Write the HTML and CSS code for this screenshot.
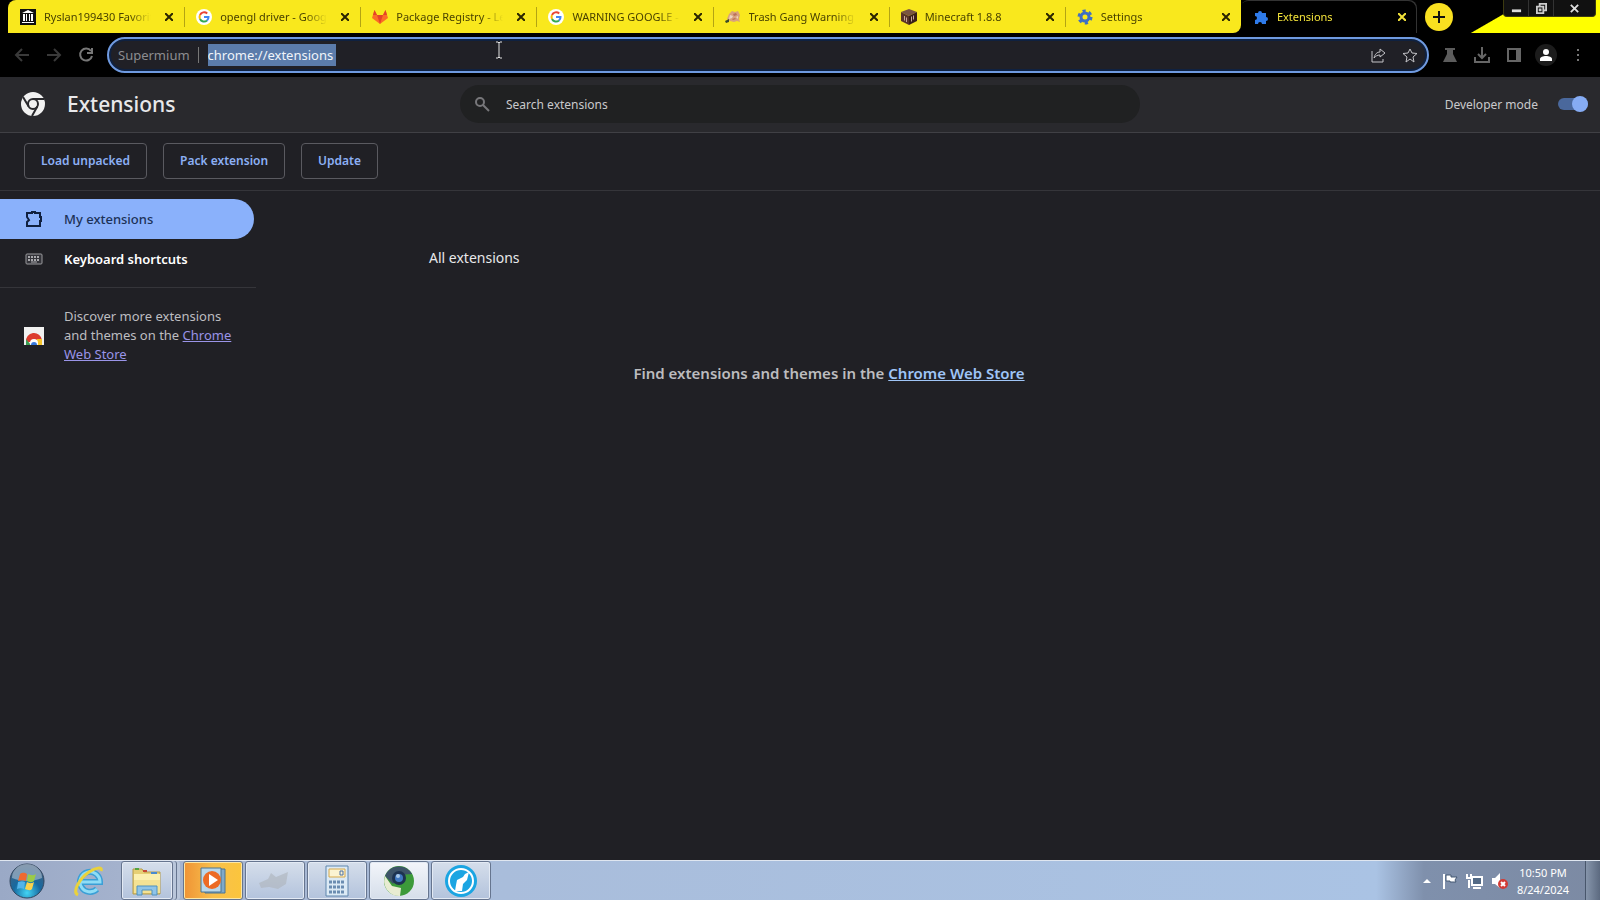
FILE: index.html
```
<!DOCTYPE html>
<html lang="en">
<head>
  <meta charset="UTF-8">
  <title>Extensions</title>
  <link rel="stylesheet" href="styles.css">
</head>
<body>

  <!-- Tab strip -->
  <div class="tabstrip">
    <div class="tabs">
      <div class="tab">
        <svg class="favicon" viewBox="0 0 16 16"><path fill="#111" d="M0 0h16v16H0z"/><path fill="#fff" d="M2 4l6-3 6 3zM3 5h2v7H3zM6 5h1v7H6zM9 5h1v7H9zM11 5h2v7h-2zM2 13h12v1H2z"/></svg>
        <span class="tab-title">Ryslan199430 Favorites</span>
        <button class="close" aria-label="Close tab"><svg viewBox="0 0 8 8"><path d="M0 0l8 8M8 0L0 8"/></svg></button>
      </div>
      <div class="tab">
        <svg class="favicon" viewBox="0 0 16 16"><circle cx="8" cy="8" r="8" fill="#fff"/><g fill="none" stroke-width="2"><path stroke="#ea4335" d="M4 6a4.500 4.500 0 0 1 7.200-1.500"/><path stroke="#fbbc05" d="M4 10a4.500 4.500 0 0 1 0-4"/><path stroke="#34a853" d="M4 10a4.500 4.500 0 0 0 7 1.500"/><path stroke="#4285f4" d="M8 8h4.500a4.500 4.500 0 0 1-1.500 3.500"/></g></svg>
        <span class="tab-title">opengl driver - Google Search</span>
        <button class="close" aria-label="Close tab"><svg viewBox="0 0 8 8"><path d="M0 0l8 8M8 0L0 8"/></svg></button>
      </div>
      <div class="tab">
        <svg class="favicon" viewBox="0 0 16 16"><path fill="#fc6d26" d="M8 15L0 9l2.500-8L5 6h6l2.500-5L16 9z"/><path fill="#e24329" d="M8 15L5 6h6zM2.500 1L5 6H1zM13.500 1L15 6h-4z"/></svg>
        <span class="tab-title">Package Registry - Legacy</span>
        <button class="close" aria-label="Close tab"><svg viewBox="0 0 8 8"><path d="M0 0l8 8M8 0L0 8"/></svg></button>
      </div>
      <div class="tab">
        <svg class="favicon" viewBox="0 0 16 16"><circle cx="8" cy="8" r="8" fill="#fff"/><g fill="none" stroke-width="2"><path stroke="#ea4335" d="M4 6a4.500 4.500 0 0 1 7.200-1.500"/><path stroke="#fbbc05" d="M4 10a4.500 4.500 0 0 1 0-4"/><path stroke="#34a853" d="M4 10a4.500 4.500 0 0 0 7 1.500"/><path stroke="#4285f4" d="M8 8h4.500a4.500 4.500 0 0 1-1.500 3.500"/></g></svg>
        <span class="tab-title">WARNING GOOGLE - Search</span>
        <button class="close" aria-label="Close tab"><svg viewBox="0 0 8 8"><path d="M0 0l8 8M8 0L0 8"/></svg></button>
      </div>
      <div class="tab">
        <svg class="favicon" viewBox="0 0 16 16"><path fill="#d9a27c" d="M4 5l3-3 3 1 3-1 2 4-1 4 1 3-3-1-3 1-4-1-3-2z"/><path fill="#b9705c" d="M8 5l3-1 1 2-3 1zM7 10l3-1 1 1-3 1z"/><path fill="#ecd3c4" d="M5 6l3 1-1 2-3 1zM11 8l2-1 0 3z"/><path fill="#3b4a2a" d="M0 12l4-2v3l-3 1z"/></svg>
        <span class="tab-title">Trash Gang Warning Sound</span>
        <button class="close" aria-label="Close tab"><svg viewBox="0 0 8 8"><path d="M0 0l8 8M8 0L0 8"/></svg></button>
      </div>
      <div class="tab">
        <svg class="favicon" viewBox="0 0 16 16"><path fill="#7a5542" d="M8 0l8 3-8 4-8-4z"/><path fill="#5b3529" d="M0 3l8 4v9l-8-4z"/><path fill="#3a2019" d="M16 3L8 7v9l8-4z"/><path fill="#c9a79b" d="M3 7l1 0v5l-1-1zM5 8l1 1v4l-1 0zM10 8l1-1v5l-1 1zM12 7l1-1v4l-1 1z"/></svg>
        <span class="tab-title">Minecraft 1.8.8</span>
        <button class="close" aria-label="Close tab"><svg viewBox="0 0 8 8"><path d="M0 0l8 8M8 0L0 8"/></svg></button>
      </div>
      <div class="tab">
        <svg class="favicon" viewBox="0 0 16 16"><circle cx="8" cy="8" r="4" fill="none" stroke="#3f6fc4" stroke-width="3"/><circle cx="8" cy="8" r="6" fill="none" stroke="#3f6fc4" stroke-width="3" stroke-dasharray="3.140 3.140"/></svg>
        <span class="tab-title">Settings</span>
        <button class="close" aria-label="Close tab"><svg viewBox="0 0 8 8"><path d="M0 0l8 8M8 0L0 8"/></svg></button>
      </div>
      <div class="tab active">
        <svg class="favicon" viewBox="0 0 16 16"><path fill="#2f7bea" d="M2 4h3a2 2 0 1 1 4 0h4v4a2 2 0 1 1 0 4v3H9a2 2 0 0 0-4 0H2v-4a2 2 0 0 0 0-4z"/></svg>
        <span class="tab-title">Extensions</span>
        <button class="close" aria-label="Close tab"><svg viewBox="0 0 8 8"><path d="M0 0l8 8M8 0L0 8"/></svg></button>
      </div>
    </div>
    <button class="new-tab" aria-label="New tab"><svg viewBox="0 0 12 12"><path d="M6 0v12M0 6h12"/></svg></button>
    <div class="frame-corner">
      <div class="window-buttons">
        <button aria-label="Minimize"><svg viewBox="0 0 12 12"><path fill="#ddd" d="M1 7h10v3H1z"/></svg></button>
        <button aria-label="Restore"><svg viewBox="0 0 12 12"><path fill="none" stroke="#ccc" stroke-width="2" d="M4 3V1h7v7H9M1 4h7v7H1zM4 7h1v1H4z"/></svg></button>
        <button class="wide" aria-label="Close"><svg viewBox="0 0 12 12"><path fill="none" stroke="#ddd" stroke-width="2" d="M2 2l8 8M10 2l-8 8"/></svg></button>
      </div>
    </div>
  </div>

  <!-- Toolbar -->
  <div class="toolbar">
    <div class="nav">
      <button aria-label="Back"><svg viewBox="0 0 16 16"><path d="M15 8H2M8 2L2 8l6 6"/></svg></button>
      <button aria-label="Forward"><svg viewBox="0 0 16 16"><path d="M1 8h13M8 2l6 6-6 6"/></svg></button>
      <button class="reload" aria-label="Reload"><svg viewBox="0 0 16 16"><path d="M13 4a6 6 0 1 0 1 5M14 1v5H9"/></svg></button>
    </div>
    <div class="omnibox">
      <label for="url">Supermium</label>
      <input id="url" value="chrome://extensions" spellcheck="false">
      <span class="omni-actions">
        <button aria-label="Share"><svg viewBox="0 0 16 16"><path d="M2 4v11h11v-3M4 11c1-4 3-6 6-6V2l5 4-5 4V8c-3 0-4 1-6 3z"/></svg></button>
        <button aria-label="Bookmark"><svg viewBox="0 0 16 16"><path d="M8 2l2 4 5 .5-4 3.500 1 5-4-3-4 3 1-5-4-3.500 5-.5z"/></svg></button>
      </span>
    </div>
    <div class="tools">
      <button aria-label="Experiments"><svg viewBox="0 0 16 16"><path fill="#5c5c5c" d="M3 1h10v2h-2v4l4 8H1l4-8V3H3z"/></svg></button>
      <button aria-label="Downloads"><svg viewBox="0 0 16 16"><path class="line" d="M8 0v10M4 7l4 4 4-4M1 10v5h14v-5"/></svg></button>
      <button aria-label="Side panel"><svg viewBox="0 0 16 16"><path class="line" d="M2 2h12v12H2z"/><path fill="#666" d="M10 2h4v12h-4z"/></svg></button>
      <button class="profile" aria-label="Profile"><svg viewBox="0 0 16 16"><circle cx="8" cy="5" r="3" fill="#fff"/><path fill="#fff" d="M2 14v-2c0-2 3-3 6-3s6 1 6 3v2z"/></svg></button>
      <button aria-label="Menu"><svg viewBox="0 0 16 16"><path fill="#777" d="M7 2h2v2H7zM7 7h2v2H7zM7 12h2v2H7z"/></svg></button>
    </div>
    <svg class="cursor" viewBox="0 0 8 16"><path d="M1 0h2l1 1 1-1h2M4 1v14M1 16h2l1-1 1 1h2"/></svg>
  </div>

  <!-- Extensions page header -->
  <header class="page-header">
    <div class="brand">
      <svg viewBox="0 0 24 24"><circle cx="12" cy="12" r="12" fill="#f1f1f1"/><circle cx="12" cy="12" r="5" fill="none" stroke="#29292d" stroke-width="2"/><path fill="none" stroke="#29292d" stroke-width="2" d="M12 7h11M7.700 14.500L2 5M16.300 14.500L11 24"/></svg>
      <h1>Extensions</h1>
    </div>
    <div class="search">
      <svg viewBox="0 0 16 16"><circle cx="6" cy="6" r="4"/><path d="M9 9l6 6"/></svg>
      <input type="search" placeholder="Search extensions" aria-label="Search extensions">
    </div>
    <div class="dev-mode">
      <label for="dev">Developer mode</label>
      <input id="dev" type="checkbox" checked>
    </div>
  </header>

  <div class="dev-bar">
    <button>Load unpacked</button>
    <button>Pack extension</button>
    <button>Update</button>
  </div>

  <div class="page">
    <nav class="sidebar">
      <a class="item selected" href="#">
        <svg viewBox="0 0 18 18"><path fill="none" stroke="#10203f" stroke-width="2" d="M2 3h5V2h3v1h5v4h1v4h-1v5H2v-4l2-2-2-3z"/></svg>
        My extensions
      </a>
      <a class="item" href="#shortcuts">
        <svg viewBox="0 0 18 18"><rect x="1" y="4" width="16" height="10" rx="1" fill="#34343a" stroke="#9a9a9e"/><path fill="none" stroke="#a9a9ad" stroke-width="2" stroke-dasharray="2 1" d="M3 7h12M3 10h12"/><path stroke="#a9a9ad" d="M6 12h6"/></svg>
        Keyboard shortcuts
      </a>
      <div class="discover">
        <svg viewBox="0 0 20 18"><path fill="#f1f1f1" d="M0 0h20v18H0z"/><path fill="#dc3c2e" d="M2 15a8 8 0 0 1 16-2l-5 2H6z"/><path fill="#3b9c51" d="M2 12l5 6H2z"/><path fill="#f7c52b" d="M13 12h5v6h-7z"/><circle cx="10" cy="16" r="4" fill="#fff"/><path fill="#3677dd" d="M7 18a3 3 0 0 1 6 0z"/></svg>
        <p>Discover more extensions and themes on the <a href="#store">Chrome Web Store</a></p>
      </div>
    </nav>

    <main>
      <h2>All extensions</h2>
      <p class="empty">Find extensions and themes in the <a href="#store">Chrome Web Store</a></p>
    </main>
  </div>

  <!-- Windows taskbar -->
  <footer class="taskbar">
    <button class="start" aria-label="Start">
      <svg viewBox="0 0 36 36"><defs><radialGradient id="orb" cx="50%" cy="85%" r="80%"><stop offset="0" stop-color="#42d4f4"/><stop offset=".5" stop-color="#1769a0"/><stop offset="1" stop-color="#45617e"/></radialGradient></defs><circle cx="18" cy="18" r="17" fill="url(#orb)" stroke="#32465f"/><path fill="#b2c2d2" opacity=".6" d="M3 15a15 14 0 0 1 30 0c-9 4-21 4-30 0z"/><path fill="#ef6a30" d="M11 11c3-2 5-1 7 0l-1 7c-2-1-5-1-8 0z"/><path fill="#9bcb48" d="M19 11c2 1 5 2 8 0l-2 7c-3 2-5 1-7 0z"/><path fill="#53b4ea" d="M9 19c3-1 5-1 7 0l-1 7c-2-1-5-1-7 0z"/><path fill="#fbd24b" d="M18 19c2 1 4 2 7 0l-2 7c-2 2-4 1-7 0z"/></svg>
    </button>
    <button class="pinned" aria-label="Internet Explorer">
      <svg viewBox="0 0 32 32"><path fill="none" stroke="#3a9fd6" stroke-width="6" d="M8 17h19a10 10 0 1 0-3 7"/><path fill="none" stroke="#8fdcf5" stroke-width="3" d="M8 17h19a10 10 0 1 0-3 7"/><path fill="none" stroke="#ead23c" stroke-width="3" d="M5 30C-1 27 6 14 16 7c6-4 14-6 12-1"/></svg>
    </button>
    <button class="task stacked" aria-label="Explorer">
      <svg viewBox="0 0 32 32"><path fill="#e6cf75" stroke="#b59b4a" d="M2 4h9l2 3h16v22H2z"/><path fill="#fbf0b0" d="M3 9h26v19H3z"/><path fill="#f4e294" d="M3 15h26v13H3z"/><path fill="#55a43f" d="M4 3h4v2H4z"/><path fill="#c74a35" d="M12 5h4v2h-4z"/><path fill="#4b8bd0" d="M20 7h6v2h-6z"/><path fill="#8fc4e8" stroke="#4e91bf" d="M6 21h20v9h-5v-5H11v5H6z"/></svg>
    </button>
    <button class="task media" aria-label="Media Player">
      <svg viewBox="0 0 32 32"><path fill="#7fa9c9" stroke="#4c7590" d="M8 4h20v24H8z"/><path fill="#b9d8eb" stroke="#4c7590" d="M4 3h20v24H4z"/><circle cx="15" cy="15" r="9" fill="#ec6b24"/><path fill="#fff" d="M12 9l9 6-9 6z"/></svg>
    </button>
    <button class="task" aria-label="Application">
      <svg class="faint" viewBox="0 0 32 32"><path fill="#aeb4bb" d="M0 18l9-4 3-6 5 4 12-5-2 12-8 5-9-2-8 1z"/></svg>
    </button>
    <button class="task" aria-label="Calculator">
      <svg viewBox="0 0 32 32"><path fill="#dceaf5" stroke="#5e86ad" d="M5 1h22v30H5z"/><path fill="#fbf3d2" stroke="#d6a94c" d="M8 4h16v8H8z"/><path fill="none" stroke="#4a6fa0" d="M19 6h3v4h-3z"/><path fill="none" stroke="#6b8db1" stroke-width="3" stroke-dasharray="3 1" d="M8 17h16M8 22h16M8 27h16"/></svg>
    </button>
    <button class="task current" aria-label="Supermium">
      <svg viewBox="0 0 32 32"><circle cx="16" cy="16" r="15" fill="#3c9a3a"/><path fill="#3d5468" d="M2 11A15 15 0 0 1 29 9l-13 1-6 9z"/><path fill="#e8ecd2" d="M2 11l7 10 9 2-1 8A15 15 0 0 1 2 11z"/><circle cx="16" cy="13" r="7" fill="#1d3350"/><circle cx="16" cy="13" r="4" fill="#3f78c0"/><circle cx="15" cy="11" r="2" fill="#a9c8e8"/></svg>
    </button>
    <button class="task" aria-label="LibreWolf">
      <svg viewBox="0 0 32 32"><circle cx="16" cy="16" r="16" fill="#1ba5e2"/><circle cx="16" cy="16" r="12" fill="none" stroke="#fff" stroke-width="2"/><path fill="#fff" d="M24 7l-2 8-4 4-1 7-7 0 1-6 1-5 6-3 2-3z"/></svg>
    </button>
    <div class="tray">
      <svg class="up" viewBox="0 0 8 6"><path fill="#fff" d="M4 1l4 4H0z"/></svg>
      <svg viewBox="0 0 18 18"><path stroke="#fff" stroke-width="2" d="M3 2v15"/><path fill="#fff" stroke="#455872" d="M5 3h5v2h6l-2 3 1 2H9V9H5z"/></svg>
      <svg viewBox="0 0 18 18"><path fill="#536a86" stroke="#fff" stroke-width="2" d="M6 5h10v8H6z"/><path fill="none" stroke="#fff" stroke-width="2" d="M7 16h8M3 8v8M1 2v4h4V2"/></svg>
      <svg viewBox="0 0 18 18"><path fill="#fff" d="M1 6h3l5-5v15l-5-4H1z"/><circle cx="12" cy="12" r="5" fill="#d23b35"/><path stroke="#fff" stroke-width="2" d="M10 10l4 4M14 10l-4 4"/></svg>
    </div>
    <div class="clock"><span>10:50 PM</span><span>8/24/2024</span></div>
    <button class="show-desktop" aria-label="Show desktop"></button>
  </footer>

</body>
</html>
```

FILE: styles.css
```
* {
  box-sizing: border-box;
}

body {
  margin: 0;
  min-height: 100vh;
  display: flex;
  flex-direction: column;
  background: #202025;
  color: #e8e8ea;
  font-family: 'Noto Sans', 'Open Sans', sans-serif;
  font-size: 13px;
}

button {
  padding: 0;
  border: none;
  background: none;
  font: inherit;
  color: inherit;
}

svg {
  display: block;
  flex: none;
}

input {
  font: inherit;
  color: inherit;
  outline: none;
}

/* Tab strip */
.tabstrip {
  display: flex;
  align-items: center;
  height: 33px;
  padding-left: 8px;
  background: #000;
}

.tabs {
  display: flex;
  flex: 0 1 1409px;
  min-width: 0;
  height: 33px;
}

.tab {
  display: flex;
  flex: 1 1 0;
  align-items: center;
  min-width: 0;
  padding: 0 7px 0 12px;
  background: #f9e81d;
  color: #4a4300;
  font-size: 11px;
}

.tab:first-child {
  border-radius: 8px 0 0 0;
}

.tab:nth-child(7) {
  border-radius: 0 0 8px 0;
}

.tab.active {
  background: #000;
  color: #f3e33a;
  box-shadow: inset -1px 1px 0 #333;
  border-radius: 8px 8px 0 0;
}

.favicon {
  width: 16px;
  height: 16px;
  margin-right: 8px;
}

.tab-title {
  flex: 1;
  overflow: hidden;
  white-space: nowrap;
  mask-image: linear-gradient(to right, #000 80%, transparent);
}

.close {
  position: relative;
  margin-left: 10px;
  padding: 4px;
}

.close svg {
  width: 8px;
  height: 8px;
  fill: none;
  stroke: #2a2500;
  stroke-width: 2;
}

.active .close svg {
  stroke: #f3e33a;
}

/* divider between two inactive tabs */
.tab:nth-child(-n+6) .close::after {
  content: '';
  position: absolute;
  left: 23px;
  top: -2px;
  width: 1px;
  height: 20px;
  background: #b3a413;
}

.new-tab {
  display: grid;
  flex: none;
  place-items: center;
  width: 28px;
  height: 28px;
  margin-left: 8px;
  border-radius: 50%;
  background: #f9e020;
}

.new-tab svg {
  width: 12px;
  height: 12px;
  stroke: #111;
  stroke-width: 2;
}

.frame-corner {
  flex: 1;
  display: flex;
  justify-content: flex-end;
  align-items: flex-start;
  height: 33px;
  padding-right: 4px;
  background: linear-gradient(150deg, #000 37px, #ff0 38px);
}

.window-buttons {
  display: flex;
  height: 17px;
  background: #111;
  border: 1px solid #3c3a10;
  border-top: none;
  border-radius: 0 0 4px 4px;
}

.window-buttons button {
  display: grid;
  place-items: center;
  width: 25px;
  border-right: 1px solid #333;
}

.window-buttons .wide {
  width: 41px;
  border-right: none;
}

.window-buttons svg {
  width: 11px;
  height: 11px;
}

/* Toolbar */
.toolbar {
  position: relative;
  display: flex;
  align-items: center;
  height: 44px;
  background: #000;
}

.nav {
  display: flex;
  gap: 16px;
  width: 107px;
  padding-left: 14px;
}

.nav svg {
  width: 16px;
  height: 16px;
  fill: none;
  stroke: #3a3a3a;
  stroke-width: 2;
}

.nav .reload svg {
  stroke: #777;
}

.omnibox {
  display: flex;
  flex: 1;
  align-items: center;
  height: 36px;
  padding: 0 9px;
  border: 2px solid #6f9ae0;
  border-radius: 18px;
  background: #202026;
  box-shadow: inset 0 0 0 2px #0f2140;
}

.omnibox label {
  padding-right: 8px;
  margin-right: 9px;
  border-right: 1px solid #777;
  color: #8d8d90;
  line-height: 16px;
}

.omnibox input {
  width: 128px;
  height: 22px;
  padding: 0;
  border: none;
  background: #5b7cab;
  color: #f0f4fa;
}

.omni-actions {
  display: flex;
  gap: 16px;
  margin-left: auto;
}

.omni-actions svg {
  width: 16px;
  height: 16px;
  fill: none;
  stroke: #c4c4c8;
}

.tools {
  display: flex;
  align-items: center;
  justify-content: space-between;
  width: 171px;
  padding: 0 14px 0 13px;
}

.tools svg {
  width: 16px;
  height: 16px;
}

.tools .line {
  fill: none;
  stroke: #666;
  stroke-width: 2;
}

.tools .profile {
  padding: 3px;
  margin: 0 -3px;
  border-radius: 50%;
  background: #1c1c1c;
}

.cursor {
  position: absolute;
  left: 495px;
  top: 9px;
  width: 8px;
  height: 16px;
  overflow: visible;
  fill: none;
  stroke: #e4e4e4;
}

/* Page header */
.page-header {
  display: grid;
  grid-template-columns: 1fr 680px 1fr;
  align-items: center;
  height: 56px;
  padding: 0 12px 1px;
  background: #29292d;
  border-bottom: 1px solid #404045;
}

.brand {
  display: flex;
  align-items: center;
  gap: 22px;
  padding-left: 9px;
}

.brand svg {
  width: 24px;
  height: 24px;
}

h1 {
  margin: 0;
  font-size: 21px;
  font-weight: 500;
}

.search {
  display: flex;
  align-items: center;
  height: 38px;
  padding-left: 14px;
  border-radius: 19px;
  background: #202122;
  font-size: 12px;
}

.search svg {
  width: 16px;
  height: 16px;
  margin-right: 16px;
  fill: none;
  stroke: #77777a;
  stroke-width: 2;
}

.search input {
  flex: 1;
  padding: 0;
  border: none;
  background: none;
}

.search input::placeholder {
  color: #c9c9cb;
}

.dev-mode {
  display: flex;
  align-items: center;
  justify-content: flex-end;
  gap: 20px;
  color: #c9c9cc;
  font-size: 12px;
}

.dev-mode input {
  position: relative;
  width: 30px;
  height: 12px;
  margin: 0;
  border-radius: 6px;
  background: #4a689c;
  appearance: none;
}

.dev-mode input::after {
  content: '';
  position: absolute;
  right: 0;
  top: -2px;
  width: 16px;
  height: 16px;
  border-radius: 50%;
  background: #86acf4;
}

.dev-bar {
  display: flex;
  align-items: center;
  gap: 16px;
  height: 58px;
  padding: 0 24px 2px;
  border-bottom: 1px solid #35353a;
}

.dev-bar button {
  height: 36px;
  padding: 0 16px;
  border: 1px solid #5a5a60;
  border-radius: 4px;
  color: #8cb0f5;
  font-size: 12px;
  font-weight: 600;
}

/* Page body */
.page {
  display: flex;
  flex: 1;
}

.sidebar {
  width: 256px;
  padding-top: 8px;
}

.item {
  display: flex;
  align-items: center;
  gap: 20px;
  height: 40px;
  margin-right: 2px;
  padding-left: 25px;
  border-radius: 0 20px 20px 0;
  color: #fff;
  font-weight: 600;
  text-decoration: none;
}

.item.selected {
  background: #8ab1fb;
  color: #1c3157;
  font-weight: 500;
}

.item svg {
  width: 18px;
  height: 18px;
  margin-right: 1px;
}

.discover {
  display: flex;
  align-items: center;
  gap: 20px;
  margin-top: 8px;
  padding: 19px 16px 0 24px;
  border-top: 1px solid #35353a;
  color: #bdbdc0;
  line-height: 19px;
}

.discover svg {
  width: 20px;
  height: 18px;
}

.discover p {
  margin: 0;
}

.discover a {
  color: #9a94e8;
}

main {
  flex: 1;
  padding: 56px 198px 0 0;
}

h2 {
  max-width: 800px;
  margin: 0 auto;
  font-size: 14px;
  font-weight: 400;
  line-height: 22px;
}

.empty {
  margin: 93px 0 0;
  color: #bcbcbf;
  font-size: 15px;
  font-weight: 600;
  line-height: 22px;
  text-align: center;
}

.empty a {
  color: #9fc4f6;
}

/* Taskbar */
.taskbar {
  display: flex;
  align-items: stretch;
  height: 40px;
  border-top: 1px solid #dfe6f0;
  background: linear-gradient(to right, #9aa9c6 0, #a4b2cd 120px, #a9bddb 500px, #aac3e4 86%, #7f90ac 89%, #7c8aa3 100%);
}

.start {
  padding: 1px 9px;
}

.start svg {
  width: 36px;
  height: 36px;
}

.pinned {
  width: 67px;
  padding: 3px 19px;
}

.pinned svg {
  width: 32px;
  height: 32px;
}

.task {
  display: grid;
  place-items: center;
  width: 60px;
  margin-right: 2px;
  border: 1px solid #66758f;
  border-radius: 3px;
  background: linear-gradient(#d5deeb, #b3c3dc);
  box-shadow: inset 0 0 0 1px #e3eaf4;
}

.task svg {
  width: 32px;
  height: 32px;
}

.task .faint {
  opacity: 0.6;
}

.task.stacked {
  width: 52px;
  margin-right: 10px;
  box-shadow: inset 0 0 0 1px #e3eaf4, 3px 0 0 #b9c6da, 4px 0 0 #66758f, 7px 0 0 #b9c6da;
}

.task.media {
  background: linear-gradient(to right, #ef9335, #f8c04c 50%, #fbc53c);
  box-shadow: inset 0 0 0 1px #fde7a4;
}

.task.current {
  background: linear-gradient(#f3f5fa, #d5deea);
}

.tray {
  display: flex;
  align-items: center;
  gap: 7px;
  margin-left: auto;
}

.tray svg {
  width: 18px;
  height: 18px;
}

.tray .up {
  width: 8px;
  height: 6px;
  margin-right: 3px;
}

.clock {
  display: flex;
  flex-direction: column;
  justify-content: center;
  width: 68px;
  margin-right: 8px;
  color: #fff;
  font-size: 11px;
  line-height: 17px;
  text-align: center;
}

.show-desktop {
  width: 15px;
  border: 1px solid #48566b;
  border-width: 0 0 0 1px;
  background: linear-gradient(to right, #8695ab, #5c6a80);
}
```
